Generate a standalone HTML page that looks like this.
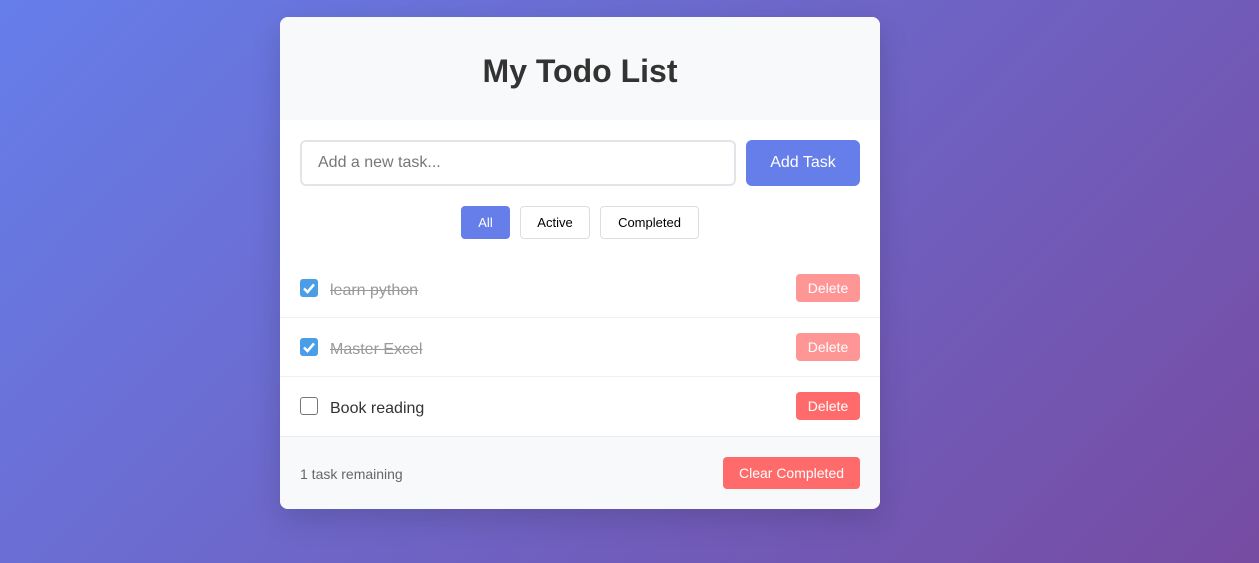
<!DOCTYPE html>
<html><head><style>
*{box-sizing:border-box;margin:0;padding:0}
body{width:1259px;height:563px;overflow:hidden;background:linear-gradient(135deg,#667eea 0%,#764ba2 100%);font-family:"Liberation Sans",sans-serif;}
.card{position:absolute;left:280px;top:17px;width:600px;height:492px;background:#fff;border-radius:8px;overflow:hidden;box-shadow:0 10px 30px rgba(0,0,0,.15)}
.head{height:103px;background:#f8f9fa;text-align:center}
.head h1{font-family:"Liberation Sans",sans-serif;font-size:32px;line-height:108px;color:#333;font-weight:bold}
.add{position:absolute;top:123px;left:20px;right:20px;height:46px}
.inp{position:absolute;left:0;top:0;width:436px;height:46px;border:2px solid #e1e5e9;border-radius:6px;padding-left:16px;font-size:16px;color:#777;line-height:42px}
.btn{position:absolute;right:0;top:0;width:114px;height:46px;background:#667eea;color:#fff;border-radius:6px;font-size:16px;text-align:center;line-height:46px}
.f{position:absolute;top:189px;height:33px;border:1px solid #ddd;border-radius:4px;font-size:13px;text-align:center;line-height:31px;color:#000}
.item{position:absolute;left:0;width:600px;height:59px;border-bottom:1px solid #f0f0f0}
.cb{position:absolute;left:20px;top:20px;width:18px;height:18px;border-radius:3px}
.cb.on{background:#4a9ee8}
.cb.off{border:1px solid #767676;background:#fff}
.txt{position:absolute;left:50px;top:2px;line-height:59px;font-family:"Liberation Sans",sans-serif;font-size:16px;color:#333}
.done{color:#999;text-decoration:line-through}
.del{position:absolute;right:20px;top:15px;width:64px;height:28px;border-radius:4px;background:#ff6b6b;color:#fff;font-size:14px;text-align:center;line-height:28px}
.del.fade{opacity:.7}
.foot{position:absolute;top:419px;left:0;width:600px;height:73px;background:#f8f9fa;border-top:1px solid #e9ecef}
</style></head><body>
<div class="card">
 <div class="head"><h1>My Todo List</h1></div>
 <div class="add"><div class="inp">Add a new task...</div><div class="btn">Add Task</div></div>
 <div class="f" style="left:181px;width:49px;background:#667eea;border-color:#667eea;color:#fff">All</div>
 <div class="f" style="left:240px;width:70px">Active</div>
 <div class="f" style="left:320px;width:99px">Completed</div>
 <div class="item" style="top:242px"><div class="cb on"><svg width="18" height="18"><path d="M4 9.5l3.5 3.5L14 5.5" stroke="#fff" stroke-width="2.5" fill="none"/></svg></div><div class="txt done">learn python</div><div class="del fade">Delete</div></div>
 <div class="item" style="top:301px"><div class="cb on"><svg width="18" height="18"><path d="M4 9.5l3.5 3.5L14 5.5" stroke="#fff" stroke-width="2.5" fill="none"/></svg></div><div class="txt done">Master Excel</div><div class="del fade">Delete</div></div>
 <div class="item" style="top:360px;border-bottom:none"><div class="cb off"></div><div class="txt">Book reading</div><div class="del">Delete</div></div>
 <div class="foot">
  <div style="position:absolute;left:20px;top:1px;line-height:73px;font-family:'Liberation Sans',sans-serif;font-size:14px;color:#666">1 task remaining</div>
  <div style="position:absolute;right:20px;top:20px;width:137px;height:32px;background:#ff6b6b;color:#fff;border-radius:4px;font-size:14px;text-align:center;line-height:32px">Clear Completed</div>
 </div>
</div>
</body></html>
